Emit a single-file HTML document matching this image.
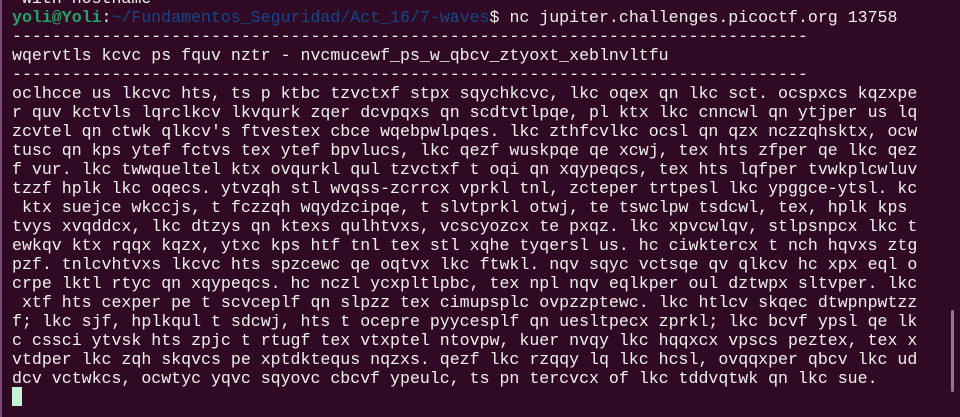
<!DOCTYPE html>
<html><head><meta charset="utf-8">
<style>
html,body{margin:0;padding:0;}
body{width:960px;height:417px;background:#300a24;overflow:hidden;position:relative;}
.lb{position:absolute;left:0;top:0;width:2px;height:417px;background:#7a4a78;}
pre{position:absolute;left:12px;top:-11px;margin:0;font-family:"Liberation Mono",monospace;font-size:16.58px;line-height:19px;color:#f2f0ee;white-space:pre;}
.g{color:#26a269;font-weight:bold;}
.b{color:#12488b;}
.cur{position:absolute;left:12px;top:387px;width:10px;height:19px;background:#c7f3d5;}
.sb{position:absolute;left:951px;top:310px;width:3px;height:82px;background:#8e7a8c;border-radius:2px;}
</style></head><body>
<div class="lb"></div>
<pre> with hostname
<span class="g">yoli@Yoli</span>:<span class="b">~/Fundamentos_Seguridad/Act_16/7-waves</span>$ nc jupiter.challenges.picoctf.org 13758
--------------------------------------------------------------------------------
wqervtls kcvc ps fquv nztr - nvcmucewf_ps_w_qbcv_ztyoxt_xeblnvltfu
--------------------------------------------------------------------------------
oclhcce us lkcvc hts, ts p ktbc tzvctxf stpx sqychkcvc, lkc oqex qn lkc sct. ocspxcs kqzxpe
r quv kctvls lqrclkcv lkvqurk zqer dcvpqxs qn scdtvtlpqe, pl ktx lkc cnncwl qn ytjper us lq
zcvtel qn ctwk qlkcv's ftvestex cbce wqebpwlpqes. lkc zthfcvlkc ocsl qn qzx nczzqhsktx, ocw
tusc qn kps ytef fctvs tex ytef bpvlucs, lkc qezf wuskpqe qe xcwj, tex hts zfper qe lkc qez
f vur. lkc twwqueltel ktx ovqurkl qul tzvctxf t oqi qn xqypeqcs, tex hts lqfper tvwkplcwluv
tzzf hplk lkc oqecs. ytvzqh stl wvqss-zcrrcx vprkl tnl, zcteper trtpesl lkc ypggce-ytsl. kc
 ktx suejce wkccjs, t fczzqh wqydzcipqe, t slvtprkl otwj, te tswclpw tsdcwl, tex, hplk kps
tvys xvqddcx, lkc dtzys qn ktexs qulhtvxs, vcscyozcx te pxqz. lkc xpvcwlqv, stlpsnpcx lkc t
ewkqv ktx rqqx kqzx, ytxc kps htf tnl tex stl xqhe tyqersl us. hc ciwktercx t nch hqvxs ztg
pzf. tnlcvhtvxs lkcvc hts spzcewc qe oqtvx lkc ftwkl. nqv sqyc vctsqe qv qlkcv hc xpx eql o
crpe lktl rtyc qn xqypeqcs. hc nczl ycxpltlpbc, tex npl nqv eqlkper oul dztwpx sltvper. lkc
 xtf hts cexper pe t scvceplf qn slpzz tex cimupsplc ovpzzptewc. lkc htlcv skqec dtwpnpwtzz
f; lkc sjf, hplkqul t sdcwj, hts t ocepre pyycesplf qn uesltpecx zprkl; lkc bcvf ypsl qe lk
c cssci ytvsk hts zpjc t rtugf tex vtxptel ntovpw, kuer nvqy lkc hqqxcx vpscs peztex, tex x
vtdper lkc zqh skqvcs pe xptdktequs nqzxs. qezf lkc rzqqy lq lkc hcsl, ovqqxper qbcv lkc ud
dcv vctwkcs, ocwtyc yqvc sqyovc cbcvf ypeulc, ts pn tercvcx of lkc tddvqtwk qn lkc sue.
</pre>
<div class="cur"></div>
<div class="sb"></div>
</body></html>
